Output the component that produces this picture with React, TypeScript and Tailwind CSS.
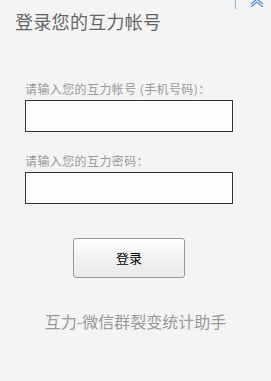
import React from 'react';

const App: React.FC = () => {
  return (
    <div
      className="relative w-[271px] h-[381px] bg-[#f4f4f4] overflow-hidden"
      style={{ fontFamily: '"Noto Sans CJK SC", "Noto Sans", sans-serif' }}
    >
      {/* window corner controls */}
      <div className="absolute top-0 left-[235px] w-px h-[9px] bg-[#8fb3d6]" />
      <svg className="absolute top-0 left-[250px]" width="14" height="7" viewBox="0 0 14 7">
        <polyline points="1,4 7,-1 13,4" fill="none" stroke="#4a90d0" strokeWidth="1.2" />
        <polyline points="1,7 7,2 13,7" fill="none" stroke="#4a90d0" strokeWidth="1.2" />
      </svg>

      <h1 className="pl-[15px] pt-[10px] text-[18px] leading-[22px] text-[#666] font-normal tracking-[0.3px]">登录您的互力帐号</h1>

      <div className="pl-[25px]">
        <label className="block mt-[49px] text-[12px] leading-[16px] text-[#999] tracking-[0.4px]">请输入您的互力帐号 (手机号码)：</label>
        <input type="text" className="block mt-[3px] w-[208px] h-[32px] border border-[#333] bg-[#fdfdfd] outline-none" />

        <label className="block mt-[21px] text-[12px] leading-[16px] text-[#999] tracking-[0.4px]">请输入您的互力密码：</label>
        <input type="password" className="block mt-[3px] w-[208px] h-[32px] border border-[#333] bg-[#fdfdfd] outline-none" />
      </div>

      <button className="block mt-[34px] ml-[73px] w-[112px] h-[40px] rounded-[3px] border border-[#9a9a9a] bg-gradient-to-b from-[#fdfdfd] to-[#e9e9e9] text-[13px] text-black">
        登录
      </button>

      <p className="mt-[33px] text-center text-[16px] leading-[20px] text-[#999]">互力-微信群裂变统计助手</p>
    </div>
  );
};

export default App;
